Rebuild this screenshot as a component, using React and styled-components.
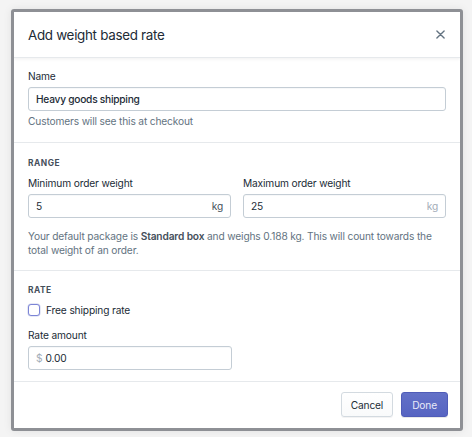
import React from 'react'
import styled, { createGlobalStyle } from 'styled-components'

const GlobalStyle = createGlobalStyle`
  html, body {
    margin: 0;
    padding: 0;
    background: #f4f4f4;
  }
  body {
    font-family: Inter, "Noto Sans", "Liberation Sans", sans-serif;
    color: #212b36;
    letter-spacing: -0.15px;
    -webkit-font-smoothing: antialiased;
  }
`

const Page = styled.div`
  width: 472px;
  height: 437px;
  padding: 9px 0 0 11px;
  box-sizing: border-box;
  overflow: hidden;
`

const Frame = styled.div`
  width: 452px;
  height: 422px;
  box-sizing: border-box;
  border: 3px solid #8e9095;
  border-radius: 3px;
  box-shadow: 0 0 8px rgba(0, 0, 0, 0.08);
  background: #fff;
  display: flex;
  flex-direction: column;
  overflow: hidden;
`

const Header = styled.div`
  height: 46px;
  flex: none;
  box-sizing: border-box;
  display: flex;
  align-items: center;
  justify-content: space-between;
  padding: 0 14px;
  border-bottom: 1px solid #e6e9ec;
  box-shadow: 0 1px 3px rgba(63, 63, 68, 0.08);
  position: relative;
  z-index: 1;
`

const Title = styled.h2`
  margin: 0;
  font-size: 13.4px;
  font-weight: 400;
  color: #212b36;
  letter-spacing: -0.3px;
`

const CloseButton = styled.button`
  border: none;
  background: none;
  padding: 0;
  width: 12px;
  height: 12px;
  display: flex;
  align-items: center;
  justify-content: center;
  color: #637381;
  cursor: pointer;
`

const Body = styled.div`
  flex: 1;
  overflow: hidden;
`

const Section = styled.div`
  padding: ${p => p.$top || 10}px 14px ${p => p.$bottom || 13}px;
  border-bottom: ${p => (p.$last ? 'none' : '1px solid #e6e9ec')};
`

const Subheading = styled.div`
  font-size: 8.4px;
  line-height: 14px;
  font-weight: 700;
  letter-spacing: 0.06em;
  text-transform: uppercase;
  color: #454f5b;
`

const Label = styled.div`
  font-size: 10.2px;
  line-height: 16px;
  color: #212b36;
  margin-top: ${p => p.$mt || 0}px;
  margin-bottom: 3px;
`

const Field = styled.div`
  height: 24px;
  box-sizing: border-box;
  border: 1px solid #c4cdd5;
  border-radius: 3px;
  box-shadow: inset 0 1px 0 0 rgba(99, 115, 129, 0.05);
  display: flex;
  align-items: center;
  padding: 0 7px;
  gap: 3px;
  width: ${p => p.$width || 'auto'};
  font-size: 10.2px;
`

const Value = styled.span`
  flex: 1;
  color: #212b36;
  font-weight: ${p => (p.$strong ? 500 : 400)};
  letter-spacing: ${p => (p.$strong ? '-0.25px' : 'inherit')};
`

const Affix = styled.span`
  color: ${p => (p.$muted ? '#a3adb8' : '#454f5b')};
`

const HelpText = styled.p`
  margin: ${p => p.$mt || 2}px 0 0;
  font-size: 10.2px;
  line-height: ${p => p.$lh || 16}px;
  color: #637381;

  strong {
    font-weight: 600;
    color: #454f5b;
  }
`

const Columns = styled.div`
  display: grid;
  grid-template-columns: 1fr 1fr;
  column-gap: 12px;
  margin-top: 5px;
`

const CheckRow = styled.label`
  display: flex;
  align-items: center;
  gap: 6px;
  height: 16px;
  margin-top: 5px;
  font-size: 10.2px;
  color: #212b36;
`

const CheckBox = styled.span`
  width: 12px;
  height: 12px;
  box-sizing: border-box;
  border: 1.5px solid #7c85d6;
  border-radius: 3px;
  background: #fff;
  box-shadow: 0 0 0 0.5px rgba(92, 106, 196, 0.3);
`

const Footer = styled.div`
  height: 47px;
  flex: none;
  box-sizing: border-box;
  border-top: 1px solid #e6e9ec;
  display: flex;
  align-items: center;
  justify-content: flex-end;
  gap: 8px;
  padding: 0 12px 1px;
`

const Button = styled.button`
  height: 25px;
  box-sizing: border-box;
  padding: 0 ${p => p.$px || 10}px;
  border-radius: 3px;
  font-family: inherit;
  font-size: 10.2px;
  letter-spacing: -0.15px;
  cursor: pointer;
  border: 1px solid ${p => (p.$primary ? '#4f5cb8' : '#d3dae0')};
  background: ${p => (p.$primary
    ? 'linear-gradient(180deg, #6371c7, #5664c2)'
    : 'linear-gradient(180deg, #fff, #f9fafb)')};
  color: ${p => (p.$primary ? '#e8eaf8' : '#212b36')};
  box-shadow: ${p => (p.$primary
    ? '0 1px 0 rgba(22, 29, 37, 0.1)'
    : '0 1px 0 rgba(22, 29, 37, 0.05)')};
`

export default function App() {
  return (
    <>
      <GlobalStyle />
      <Page>
        <Frame>
          <Header>
            <Title>Add weight based rate</Title>
            <CloseButton aria-label="Close">
              <svg width="9" height="9" viewBox="0 0 10 10">
                <path d="M1 1 L9 9 M9 1 L1 9" stroke="currentColor" strokeWidth="1.5" strokeLinecap="round" />
              </svg>
            </CloseButton>
          </Header>
          <Body>
            <Section>
              <Label>Name</Label>
              <Field>
                <Value $strong>Heavy goods shipping</Value>
              </Field>
              <HelpText>Customers will see this at checkout</HelpText>
            </Section>
            <Section $top={13} $bottom={13}>
              <Subheading>Range</Subheading>
              <Columns>
                <div>
                  <Label>Minimum order weight</Label>
                  <Field>
                    <Value>5</Value>
                    <Affix>kg</Affix>
                  </Field>
                </div>
                <div>
                  <Label>Maximum order weight</Label>
                  <Field>
                    <Value>25</Value>
                    <Affix $muted>kg</Affix>
                  </Field>
                </div>
              </Columns>
              <HelpText $mt={11} $lh={14}>
                Your default package is <strong>Standard box</strong> and weighs 0.188 kg. This will count towards the total weight of an order.
              </HelpText>
            </Section>
            <Section $top={12} $last>
              <Subheading>Rate</Subheading>
              <CheckRow>
                <CheckBox />
                Free shipping rate
              </CheckRow>
              <Label $mt={9}>Rate amount</Label>
              <Field $width="204px">
                <Affix $muted>$</Affix>
                <Value>0.00</Value>
              </Field>
            </Section>
          </Body>
          <Footer>
            <Button $px={9}>Cancel</Button>
            <Button $primary $px={10}>Done</Button>
          </Footer>
        </Frame>
      </Page>
    </>
  )
}
